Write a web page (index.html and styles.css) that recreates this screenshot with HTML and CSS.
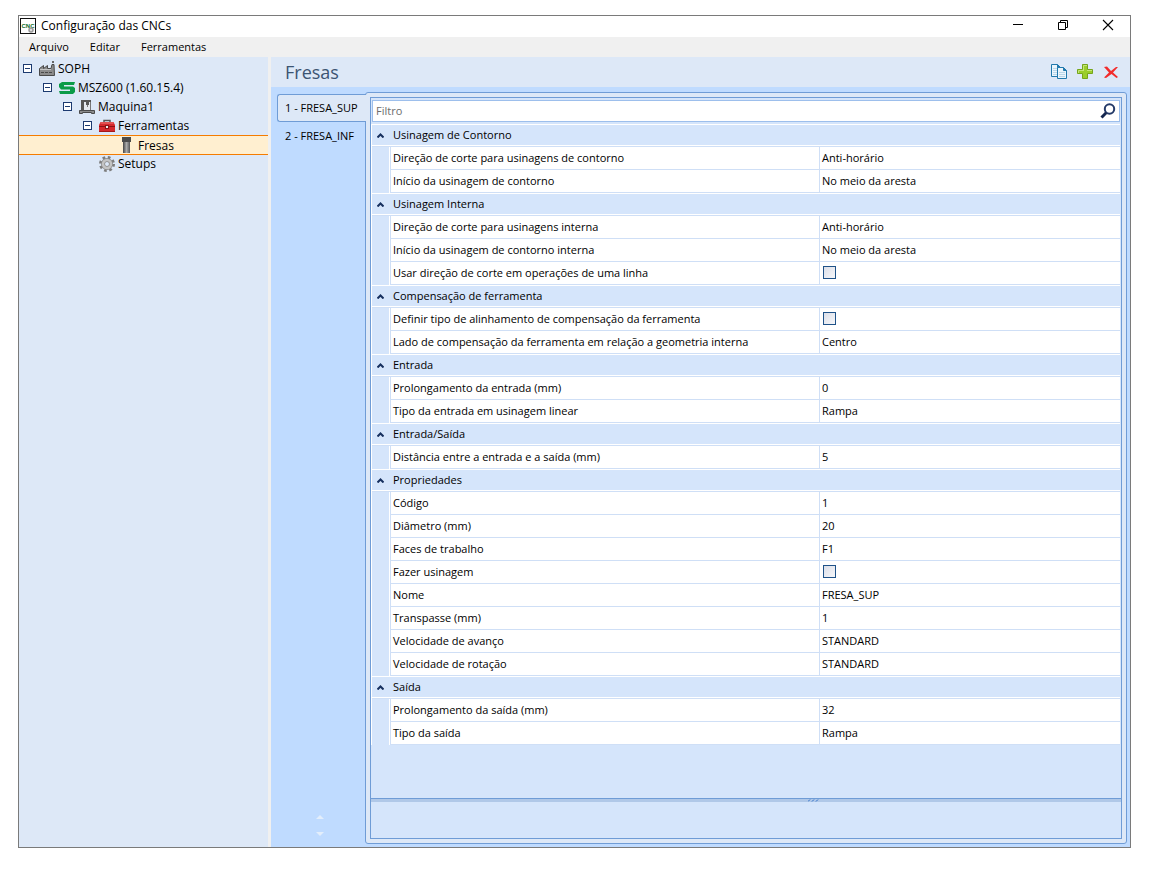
FILE: index.html
```
<!DOCTYPE html>
<html lang="pt-BR">
<head>
  <meta charset="UTF-8" />
  <meta name="viewport" content="width=device-width, initial-scale=1.0"/>
  <title>Configuração das CNCs</title>
  <link rel="stylesheet" href="styles.css">
</head>
<body>
  <div class="window">
    <header class="titlebar">
      <svg class="app-icon" width="16" height="16" viewBox="0 0 16 16">
        <rect x="0.5" y="0.5" width="15" height="15" fill="#fff" stroke="#111"/>
        <text class="app-icon-text" x="8" y="10" text-anchor="middle">CNC</text>
        <circle cx="11" cy="12" r="2" fill="#ddd" stroke="#999" stroke-width="1.5"/>
      </svg>
      <h1>Configuração das CNCs</h1>
      <div class="window-buttons">
        <button type="button" aria-label="Minimizar"><svg width="12" height="12" viewBox="0 0 12 12"><path d="M1 5.5H11" stroke="#000"/></svg></button>
        <button type="button" aria-label="Restaurar"><svg width="12" height="12" viewBox="0 0 12 12" fill="none" stroke="#000"><path d="M1.5 3.5H8.5V10.5H1.5ZM3.5 3.5V1.5H10.5V8.5H8.5"/></svg></button>
        <button type="button" aria-label="Fechar"><svg width="12" height="12" viewBox="0 0 12 12"><path d="M1 1L11 11M11 1L1 11" stroke="#000" stroke-width="1.1"/></svg></button>
      </div>
    </header>

    <nav class="menubar">
      <button type="button">Arquivo</button>
      <button type="button">Editar</button>
      <button type="button">Ferramentas</button>
    </nav>

    <div class="workspace">
      <aside class="sidebar">
        <ul class="tree">
          <li class="node level-1">
            <button type="button" class="toggle" aria-label="Recolher SOPH"></button>
            <svg width="16" height="16" viewBox="0 0 16 16">
              <path d="M0.5 14.5V7.5L4.5 4.5V7.5L8.5 4.5V7.5H12L13 3.5H15L15.5 14.5Z" fill="#8c8c8c" stroke="#4a4a4a"/>
              <path d="M1 8.5H12" stroke="#c4c4c4"/>
              <path d="M2 11.5H5M6 11.5H9M10 11.5H13" stroke="#4a4a4a"/>
              <path d="M14 0V2" stroke="#666" stroke-width="2"/>
            </svg>
            <span>SOPH</span>
          </li>
          <li class="node level-2">
            <button type="button" class="toggle" aria-label="Recolher MSZ600"></button>
            <svg width="16" height="16" viewBox="0 0 16 16">
              <path d="M16 2H3L0 4V7L2 9.5H11V11H0L1 14H14L16 12V8L14 6.5H5V5H15Z" fill="#0b9b48"/>
            </svg>
            <span>MSZ600 (1.60.15.4)</span>
          </li>
          <li class="node level-3">
            <button type="button" class="toggle" aria-label="Recolher Maquina1"></button>
            <svg width="16" height="16" viewBox="0 0 16 16">
              <path d="M4 2H11V11H4Z" fill="#e4e8ee"/>
              <path d="M11.5 2V12" stroke="#777"/>
              <path d="M3.5 1V12" stroke="#555" stroke-width="3"/>
              <path d="M2 2H12" stroke="#555" stroke-width="2"/>
              <path d="M8.5 3V6" stroke="#555" stroke-width="3"/>
              <path d="M8.5 6V8" stroke="#777"/>
              <path d="M0.5 11.5H15.5V14.5H12.5V13.5H3.5V14.5H0.5Z" fill="#8b8b8b" stroke="#4a4a4a"/>
            </svg>
            <span>Maquina1</span>
          </li>
          <li class="node level-4">
            <button type="button" class="toggle" aria-label="Recolher Ferramentas"></button>
            <svg width="16" height="16" viewBox="0 0 16 16">
              <path d="M5 5V2.5H11V5" fill="none" stroke="#555" stroke-width="1.5"/>
              <path d="M1.5 4H14.5L16 7V14H0V7Z" fill="#d5292d"/>
              <path d="M1.5 5H14.5" stroke="#ee7b78"/>
              <path d="M0 8.5H16" stroke="#8b1216"/>
              <path d="M0 13.5H16" stroke="#a3191d"/>
              <rect x="6.5" y="7.5" width="3" height="3" fill="#eee" stroke="#8b1216"/>
            </svg>
            <span>Ferramentas</span>
          </li>
          <li class="node level-5 selected">
            <svg width="16" height="16" viewBox="0 0 16 16">
              <defs>
                <linearGradient id="steel"><stop offset="0" stop-color="#444"/><stop offset=".5" stop-color="#aaa"/><stop offset="1" stop-color="#555"/></linearGradient>
              </defs>
              <rect x="3" y="0" width="9" height="5" fill="#4b4b4b"/>
              <rect x="4" y="5" width="7" height="11" fill="url(#steel)"/>
            </svg>
            <span>Fresas</span>
          </li>
          <li class="node level-4 leaf">
            <svg width="16" height="16" viewBox="0 0 16 16">
              <circle cx="8" cy="8" r="6.5" fill="none" stroke="#7d7d7d" stroke-width="3" stroke-dasharray="2.6 2.505"/>
              <circle cx="8" cy="8" r="4" fill="none" stroke="#8a8a8a" stroke-width="4"/>
              <circle cx="8" cy="8" r="4" fill="none" stroke="#c4c4c4" stroke-width="2.5"/>
            </svg>
            <span>Setups</span>
          </li>
        </ul>
      </aside>

      <main class="content">
        <div class="content-header">
          <h2>Fresas</h2>
          <div class="actions">
            <button type="button" aria-label="Copiar">
              <svg width="16" height="16" viewBox="0 0 16 16" stroke="#2179ad">
                <path d="M0.5 0.5H6.5L9.5 3.5V12.5H0.5Z" fill="#eaf5fc"/>
                <path d="M6.5 0.5V3.5H9.5" fill="#2179ad"/>
                <path d="M2 4.5H6M2 6.5H6M2 8.5H6M2 10.5H6" stroke="#b9d7ea"/>
                <path d="M6.5 3.5H12.5L15.5 6.5V14.5H6.5Z" fill="#eaf5fc"/>
                <path d="M12.5 3.5V6.5H15.5" fill="#2179ad"/>
                <path d="M8 8.5H14M8 10.5H14M8 12.5H14" stroke="#b9d7ea"/>
              </svg>
            </button>
            <button type="button" aria-label="Adicionar">
              <svg width="16" height="16" viewBox="0 0 16 16">
                <path d="M5.5 0.5H10.5V5.5H15.5V9.5H10.5V14.5H5.5V9.5H0.5V5.5H5.5Z" fill="#9bce2d" stroke="#75a51c"/>
                <path d="M6.5 6.5V1.5H10M1.5 9V6.5H7M10 6.5H15" fill="none" stroke="#c5e67a"/>
              </svg>
            </button>
            <button type="button" aria-label="Excluir">
              <svg width="16" height="16" viewBox="0 0 16 16" fill="#f22b2b">
                <path d="M1 3L4 2.5L8 7L13 3H15L10 8.5L15 13L13.5 14L8.5 10L3 14L1 13.5L6 8.5Z"/>
              </svg>
            </button>
          </div>
        </div>

        <div class="tab-area">
          <div class="tab-strip">
            <div class="tabs" role="tablist">
              <button type="button" class="tab active" role="tab" aria-selected="true">1 - FRESA_SUP</button>
              <button type="button" class="tab" role="tab" aria-selected="false">2 - FRESA_INF</button>
            </div>
            <div class="tab-scroll">
              <button type="button" aria-label="Rolar para cima"><svg width="8" height="4" viewBox="0 0 8 4"><path d="M0 4L4 0L8 4Z" fill="#e3eefb"/></svg></button>
              <button type="button" aria-label="Rolar para baixo"><svg width="8" height="4" viewBox="0 0 8 4"><path d="M0 0L4 4L8 0Z" fill="#e3eefb"/></svg></button>
            </div>
          </div>

          <div class="tab-page">
            <section class="property-grid">
              <div class="filter">
                <input type="text" placeholder="Filtro" aria-label="Filtro">
                <svg width="16" height="16" viewBox="0 0 16 16">
                  <circle cx="9.5" cy="6" r="4.7" fill="#fff" stroke="#243a68" stroke-width="2"/>
                  <path d="M6.2 9.8L1.5 14.5" stroke="#14264e" stroke-width="3"/>
                </svg>
              </div>

              <table class="properties">
                <colgroup>
                  <col class="col-gutter">
                  <col class="col-name">
                  <col class="col-value">
                </colgroup>
                <tbody>
                  <tr class="category"><td><button type="button" class="collapse" aria-label="Recolher"><svg width="7" height="5" viewBox="0 0 7 5"><path d="M0.5 4.5L3.5 1.5L6.5 4.5" /></svg></button></td><th colspan="2">Usinagem de Contorno</th></tr>
                  <tr><td></td><th>Direção de corte para usinagens de contorno</th><td>Anti-horário</td></tr>
                  <tr><td></td><th>Início da usinagem de contorno</th><td>No meio da aresta</td></tr>
                </tbody>
                <tbody>
                  <tr class="category"><td><button type="button" class="collapse" aria-label="Recolher"><svg width="7" height="5" viewBox="0 0 7 5"><path d="M0.5 4.5L3.5 1.5L6.5 4.5" /></svg></button></td><th colspan="2">Usinagem Interna</th></tr>
                  <tr><td></td><th>Direção de corte para usinagens interna</th><td>Anti-horário</td></tr>
                  <tr><td></td><th>Início da usinagem de contorno interna</th><td>No meio da aresta</td></tr>
                  <tr><td></td><th><label for="corteLinha">Usar direção de corte em operações de uma linha</label></th><td><input type="checkbox" id="corteLinha"></td></tr>
                </tbody>
                <tbody>
                  <tr class="category"><td><button type="button" class="collapse" aria-label="Recolher"><svg width="7" height="5" viewBox="0 0 7 5"><path d="M0.5 4.5L3.5 1.5L6.5 4.5" /></svg></button></td><th colspan="2">Compensação de ferramenta</th></tr>
                  <tr><td></td><th><label for="alinhamento">Definir tipo de alinhamento de compensação da ferramenta</label></th><td><input type="checkbox" id="alinhamento"></td></tr>
                  <tr><td></td><th>Lado de compensação da ferramenta em relação a geometria interna</th><td>Centro</td></tr>
                </tbody>
                <tbody>
                  <tr class="category"><td><button type="button" class="collapse" aria-label="Recolher"><svg width="7" height="5" viewBox="0 0 7 5"><path d="M0.5 4.5L3.5 1.5L6.5 4.5" /></svg></button></td><th colspan="2">Entrada</th></tr>
                  <tr><td></td><th>Prolongamento da entrada (mm)</th><td>0</td></tr>
                  <tr><td></td><th>Tipo da entrada em usinagem linear</th><td>Rampa</td></tr>
                </tbody>
                <tbody>
                  <tr class="category"><td><button type="button" class="collapse" aria-label="Recolher"><svg width="7" height="5" viewBox="0 0 7 5"><path d="M0.5 4.5L3.5 1.5L6.5 4.5" /></svg></button></td><th colspan="2">Entrada/Saída</th></tr>
                  <tr><td></td><th>Distância entre a entrada e a saída (mm)</th><td>5</td></tr>
                </tbody>
                <tbody>
                  <tr class="category"><td><button type="button" class="collapse" aria-label="Recolher"><svg width="7" height="5" viewBox="0 0 7 5"><path d="M0.5 4.5L3.5 1.5L6.5 4.5" /></svg></button></td><th colspan="2">Propriedades</th></tr>
                  <tr><td></td><th>Código</th><td>1</td></tr>
                  <tr><td></td><th>Diâmetro (mm)</th><td>20</td></tr>
                  <tr><td></td><th>Faces de trabalho</th><td>F1</td></tr>
                  <tr><td></td><th><label for="fazerUsinagem">Fazer usinagem</label></th><td><input type="checkbox" id="fazerUsinagem"></td></tr>
                  <tr><td></td><th>Nome</th><td>FRESA_SUP</td></tr>
                  <tr><td></td><th>Transpasse (mm)</th><td>1</td></tr>
                  <tr><td></td><th>Velocidade de avanço</th><td>STANDARD</td></tr>
                  <tr><td></td><th>Velocidade de rotação</th><td>STANDARD</td></tr>
                </tbody>
                <tbody>
                  <tr class="category"><td><button type="button" class="collapse" aria-label="Recolher"><svg width="7" height="5" viewBox="0 0 7 5"><path d="M0.5 4.5L3.5 1.5L6.5 4.5" /></svg></button></td><th colspan="2">Saída</th></tr>
                  <tr><td></td><th>Prolongamento da saída (mm)</th><td>32</td></tr>
                  <tr><td></td><th>Tipo da saída</th><td>Rampa</td></tr>
                </tbody>
              </table>

              <div class="grid-splitter">
                <svg width="12" height="3" viewBox="0 0 12 3"><path d="M0 2.5L2 0.5M4 2.5L6 0.5M8 2.5L10 0.5" stroke="#2f6fc9"/></svg>
              </div>
              <div class="description"></div>
            </section>
          </div>
        </div>
      </main>
    </div>
  </div>
</body>
</html>
```
FILE: styles.css
```
* { box-sizing: border-box; }
body { margin: 0; min-height: 100vh; padding: 15px 18px 25px; display: flex; background: #fff; color: #000; font-family: "Open Sans", "Noto Sans", sans-serif; font-size: 11px; }
button { font: inherit; color: inherit; background: none; border: none; padding: 0; cursor: pointer; }
svg { display: block; flex: none; }
h1, h2 { margin: 0; font-weight: normal; }

.window { flex: 1; min-width: 0; display: flex; flex-direction: column; border: 1px solid #7a7a7a; }

.titlebar { display: flex; align-items: center; height: 21px; padding-left: 1px; background: #fff; }
.app-icon { margin-bottom: 2px; }
.app-icon-text { font: bold 6px "Liberation Sans", sans-serif; fill: #0d6b26; }
.titlebar h1 { margin-left: 5px; padding-bottom: 2px; font-size: 12px; line-height: 18px; }
.window-buttons { margin-left: auto; display: flex; }
.window-buttons button { width: 45px; height: 20px; padding-bottom: 4px; display: flex; align-items: center; justify-content: center; }

.menubar { display: flex; gap: 21px; height: 20px; padding: 0 0 2px 10px; background: #f0f0f0; }

.workspace { flex: 1; display: flex; gap: 3px; background: #f0f0f0; }

/* Tree */
.sidebar { flex: 0 0 249px; background: #dde8f7; }
.tree { list-style: none; margin: 0; padding: 2px 0 0; font-size: 12px; }
.node { display: flex; align-items: center; height: 19px; padding-left: 4px; }
.node svg { margin-left: 7px; }
.node span { margin-left: 3px; white-space: nowrap; }
.level-2 { padding-left: 24px; }
.level-3 { padding-left: 44px; }
.level-4 { padding-left: 64px; }
.leaf { padding-left: 73px; }
.level-5 { padding-left: 93px; }
.selected { height: 20px; margin-bottom: -1px; background: #ffefd0; border-top: 1px solid #f57c00; border-bottom: 1px solid #f57c00; }
.toggle { width: 9px; height: 9px; border: 1px solid #1c3a70; background: linear-gradient(#1c3a70, #1c3a70) center / 5px 1px no-repeat #fff; }

.content { flex: 1; min-width: 0; display: flex; flex-direction: column; background: #bfdbff; }
.content-header { display: flex; align-items: center; height: 30px; padding: 0 11px 0 14px; background: #dde8f7; }
.content-header h2 { font-size: 18px; line-height: 28px; color: #3c5472; }
.actions { margin-left: auto; display: flex; gap: 10px; }

/* Tabs */
.tab-area { flex: 1; display: flex; padding: 5px 3px 3px 6px; }
.tab-strip { display: flex; flex-direction: column; justify-content: space-between; flex: 0 0 89px; padding: 2px 0 8px; margin-right: -1px; }
.tabs { display: flex; flex-direction: column; }
.tab { height: 28px; padding: 0 7px 2px; text-align: left; white-space: nowrap; border: 1px solid transparent; border-right: none; }
.tab.active { position: relative; z-index: 1; background: #dde8f7; border-color: #6f9cd6; border-radius: 3px 0 0 3px; }
.tab-scroll { display: flex; flex-direction: column; align-items: center; gap: 13px; padding-right: 4px; }
.tab-page { flex: 1; min-width: 0; display: flex; padding: 4px; background: #dde8f7; border: 1px solid #6f9cd6; border-radius: 3px; }

/* Property grid */
.property-grid { flex: 1; min-width: 0; display: flex; flex-direction: column; background: #d5e5fb; border: 1px solid #6f9cd6; }
.filter { display: flex; align-items: center; height: 22px; margin: 2px 1px; padding-right: 3px; background: #fff; border: 1px solid #9dbfec; }
.filter input { flex: 1; min-width: 0; height: 20px; padding: 0 3px 2px; border: none; outline: none; background: none; font: inherit; }
.filter input::placeholder { color: #6d6d6d; opacity: 1; }
.properties { width: 100%; table-layout: fixed; border-spacing: 0; border-right: 1px solid #d5e5fb; border-left: 1px solid #fff; }
.col-gutter { width: 18px; }
.col-name { width: 429px; }
.properties td, .properties th { height: 23px; padding: 0 0 1px 2px; line-height: 20px; text-align: left; font-weight: normal; white-space: nowrap; overflow: hidden; background: #fff; border-bottom: 1px solid #cfdff6; }
.properties td:first-child { padding: 0; background: #d5e5fb; border-right: 1px solid #fff; border-bottom: none; }
.properties th { border-left: 1px solid #cfdff6; }
.properties td:last-child { border-left: 1px solid #cfdff6; }
.properties .category td, .properties .category th { background: #d5e5fb; border: none; border-top: 1px solid #fff; border-bottom: 1px solid #cfdff6; box-shadow: inset 0 -1px #fff; }
.properties .category th { padding-left: 3px; }
.collapse { display: flex; align-items: center; justify-content: center; width: 17px; height: 20px; }
.collapse path { fill: none; stroke: #16305f; stroke-width: 2; }
.properties input { appearance: none; display: block; width: 13px; height: 13px; margin: 0 0 0 1px; border: 1px solid #1f5288; background: linear-gradient(135deg, #dcdfe8, #f6f7fa); }
.properties input:checked { background: #1f5288; }

.grid-splitter { display: flex; justify-content: center; height: 4px; margin-top: auto; padding-left: 136px; background: #b0c8e8; border-top: 1px solid #6f9cd6; }
.description { height: 36px; }
```
